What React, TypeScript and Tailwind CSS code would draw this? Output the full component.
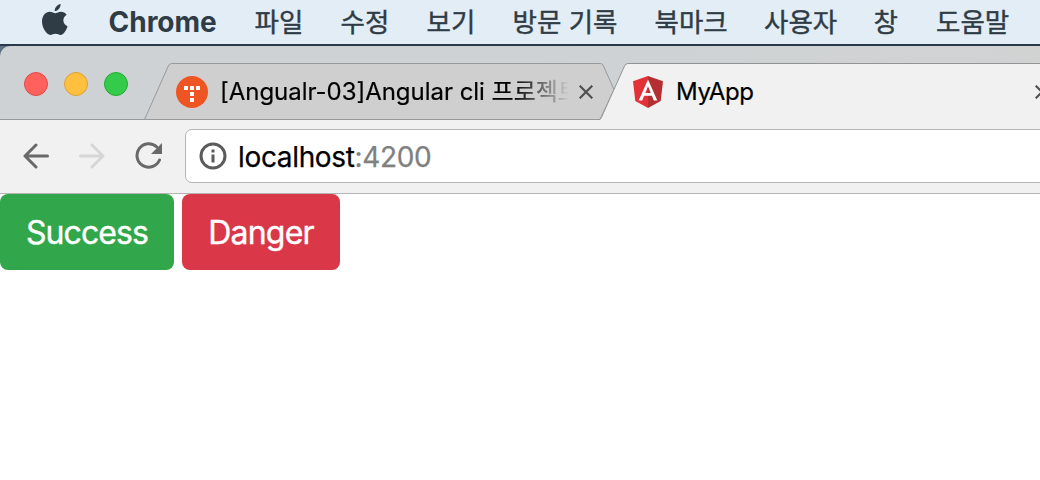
import React from 'react';

const menus = [
  { label: '파일', cls: 'w-[86px]' },
  { label: '수정', cls: 'w-[86px]' },
  { label: '보기', cls: 'w-[86px]' },
  { label: '방문 기록', cls: 'w-[142px]' },
  { label: '북마크', cls: 'w-[109.5px]' },
  { label: '사용자', cls: 'w-[109.5px]' },
  { label: '창', cls: 'w-[62.5px]' },
  { label: '도움말', cls: 'w-[90px]' },
];

function AppleLogo() {
  return (
    <svg className="h-[32px] w-[26px] shrink-0" viewBox="0 0 26 32" fill="#2f3b45">
      <path d="M18.6 0C18.8 3.4 15.9 7 12.7 7.1 12.4 3.6 15.6.4 18.6 0Z" />
      <path d="M13.3 9.3c1.4 0 3.2-1.6 5.700-1.600 2.100 0 4.400 1 5.700 3.100-4.900 2.700-4.200 9.500.9 11.400-.8 2.600-3.600 8.800-7.100 8.800-1.800 0-2.500-1.200-5-1.200-2.400 0-3.200 1.200-5 1.200C4.600 31 0 23.900 0 17.600 0 11.500 3.900 7.800 7.700 7.800c2.400 0 4.300 1.500 5.600 1.500Z" />
    </svg>
  );
}

function MenuBar() {
  return (
    <header className="flex h-[46px] shrink-0 items-center border-b-2 border-[#29394a] bg-[#e2edf6] pl-[42px] text-[#2f3b45]">
      <div className="flex h-8 items-center -mt-1">
        <AppleLogo />
      </div>
      <span className="ml-[40.5px] w-[146px] whitespace-nowrap text-[28px] font-bold leading-[44px]">Chrome</span>
      <nav className="flex text-[26.5px] leading-[44px] [-webkit-text-stroke:0.4px_#2f3b45]">
        {menus.map((m) => (
          <span key={m.label} className={`${m.cls} shrink-0 whitespace-nowrap`}>{m.label}</span>
        ))}
      </nav>
    </header>
  );
}

function CloseIcon() {
  return (
    <svg className="h-[14px] w-[14px] shrink-0" viewBox="0 0 14 14" stroke="#505050" strokeWidth="2.2">
      <path d="M.7.7 13.300 13.300M13.300.7.7 13.300" />
    </svg>
  );
}

function TistoryIcon() {
  return (
    <svg className="h-8 w-8 shrink-0" viewBox="0 0 32 32">
      <circle cx="16" cy="16" r="16" fill="#ee5522" />
      <path fill="#fff" d="M8 10h4v4H8zM14 10h4v4h-4zM20 10h4v4h-4zM14 16h4v4h-4zM14 22h4v4h-4z" />
    </svg>
  );
}

function AngularIcon() {
  return (
    <svg className="h-8 w-[30px] shrink-0" viewBox="0 0 30 32">
      <path fill="#e23237" d="M15 0 0 5.300 2.300 25 15 32Z" />
      <path fill="#b52e31" d="M15 0 30 5.300 27.700 25 15 32Z" />
      <path fill="#fff" fillRule="evenodd" d="M15 3.500 5.700 24.500h3.500l1.900-4.700h7.800l1.900 4.700h3.500ZM15 10.200l2.700 6.700h-5.400Z" />
    </svg>
  );
}

function TabStrip() {
  return (
    <div className="relative flex h-[74px] shrink-0 items-start overflow-hidden rounded-tl-[10px] bg-gradient-to-r from-[#cfd2d5] via-[#ced2d4] to-[#d1d3d3]">
      <svg className="absolute left-0 top-0 h-[74px] w-[1040px]" viewBox="0 0 1040 74" fill="none">
        <path d="M0 73.500H1040" stroke="#98999b" />
        <path d="M144.500 73.500 168.300 20Q169.400 17.500 171.500 17.500H600.500Q602.500 17.500 603.500 20L614 43.500 600 73.500Z" fill="#cfcfcf" stroke="#98999b" />
        <path d="M600 74 624.500 20Q625.700 17.500 628 17.500H1045V76H599Z" fill="#f1f1f1" />
        <path d="M599 73.500Q600.500 73.500 601.400 71.500L624.500 20Q625.700 17.500 628 17.500H1045" stroke="#919394" />
      </svg>
      <div className="relative flex w-[144px] gap-4 pl-6 pt-[26px]">
        <i className="h-6 w-6 rounded-full border border-[#e24b48] bg-[#ff625d]" />
        <i className="h-6 w-6 rounded-full border border-[#dfa035] bg-[#ffbf3f]" />
        <i className="h-6 w-6 rounded-full border border-[#22ac34] bg-[#34cb4b]" />
      </div>
      <div className="relative mt-[18px] flex h-14 w-[456px] items-center pl-8">
        <TistoryIcon />
        <div className="ml-[12px] w-[349px] overflow-hidden whitespace-nowrap text-[24px] leading-[36px] tracking-[-0.03px] text-black [-webkit-text-stroke:0.2px_black] [mask-image:linear-gradient(to_right,black_84%,transparent_100%)]">
          [Angualr-03]Angular cli 프로젝트
        </div>
        <div className="ml-[10px]"><CloseIcon /></div>
      </div>
      <div className="relative mt-[18px] flex h-14 w-[440px] items-center pl-[33px]">
        <AngularIcon />
        <span className="ml-[13px] w-[359px] shrink-0 text-[24px] leading-[36px] tracking-[-0.4px] text-black [-webkit-text-stroke:0.2px_black]">MyApp</span>
        <CloseIcon />
      </div>
    </div>
  );
}

function Toolbar() {
  return (
    <div className="flex h-[74px] shrink-0 items-center overflow-hidden border-b border-[#b3b3b3] bg-[#f1f1f1]">
      <div className="flex w-[185px] shrink-0 items-center pb-[2px] pl-[22.5px]">
        <svg className="h-[26px] w-[26px]" viewBox="0 0 26 26" fill="none" stroke="#696969" strokeWidth="3" strokeLinecap="round" strokeLinejoin="round">
          <path d="M24.500 13H2M13 2 2 13 13 24" />
        </svg>
        <svg className="ml-[30px] h-[26px] w-[26px]" viewBox="0 0 26 26" fill="none" stroke="#d6d6d6" strokeWidth="3" strokeLinecap="round" strokeLinejoin="round">
          <path d="M1.500 13H24M13 2 24 13 13 24" />
        </svg>
        <svg className="ml-[30px] h-[28px] w-[28px]" viewBox="0 0 28 28" fill="none">
          <path d="M21.800 5A11.700 11.700 0 1 0 24.500 18" stroke="#696969" strokeWidth="3" strokeLinecap="round" />
          <path d="M27 1V12H16Z" fill="#696969" />
        </svg>
      </div>
      <div className="mt-[-1px] flex h-[54px] w-[870px] shrink-0 items-center rounded-[7px] border border-[#b5b5b5] bg-white pl-[12.5px]">
        <svg className="h-[28px] w-[28px] shrink-0" viewBox="0 0 28 28">
          <circle cx="14" cy="14" r="12" fill="none" stroke="#5b5b5b" strokeWidth="3" />
          <path d="M12.500 7.500h3v3h-3zM12.500 12.500h3v8h-3z" fill="#5b5b5b" />
        </svg>
        <span className="ml-[11.5px] pt-[2px] text-[28px] leading-[40px] tracking-[-0.34px] text-black [-webkit-text-stroke:0.25px]">localhost<span className="text-[#808080]">:4200</span></span>
      </div>
    </div>
  );
}

export default function App() {
  return (
    <div className="flex h-[480px] w-[1040px] flex-col overflow-hidden bg-white font-[Inter,'Noto_Sans_CJK_KR',sans-serif]">
      <MenuBar />
      <div className="flex flex-col bg-[#5f7084]">
        <TabStrip />
        <Toolbar />
      </div>
      <main className="flex gap-2">
        <button className="h-[76px] w-[174px] rounded-[8px] bg-[#31a64a] pt-[2px] text-[32px] leading-[48px] tracking-[-0.9px] text-white [-webkit-text-stroke:0.4px_white]">Success</button>
        <button className="h-[76px] w-[158px] rounded-[8px] bg-[#da3748] pt-[2px] text-[32px] leading-[48px] tracking-[-0.8px] text-white [-webkit-text-stroke:0.4px_white]">Danger</button>
      </main>
    </div>
  );
}
